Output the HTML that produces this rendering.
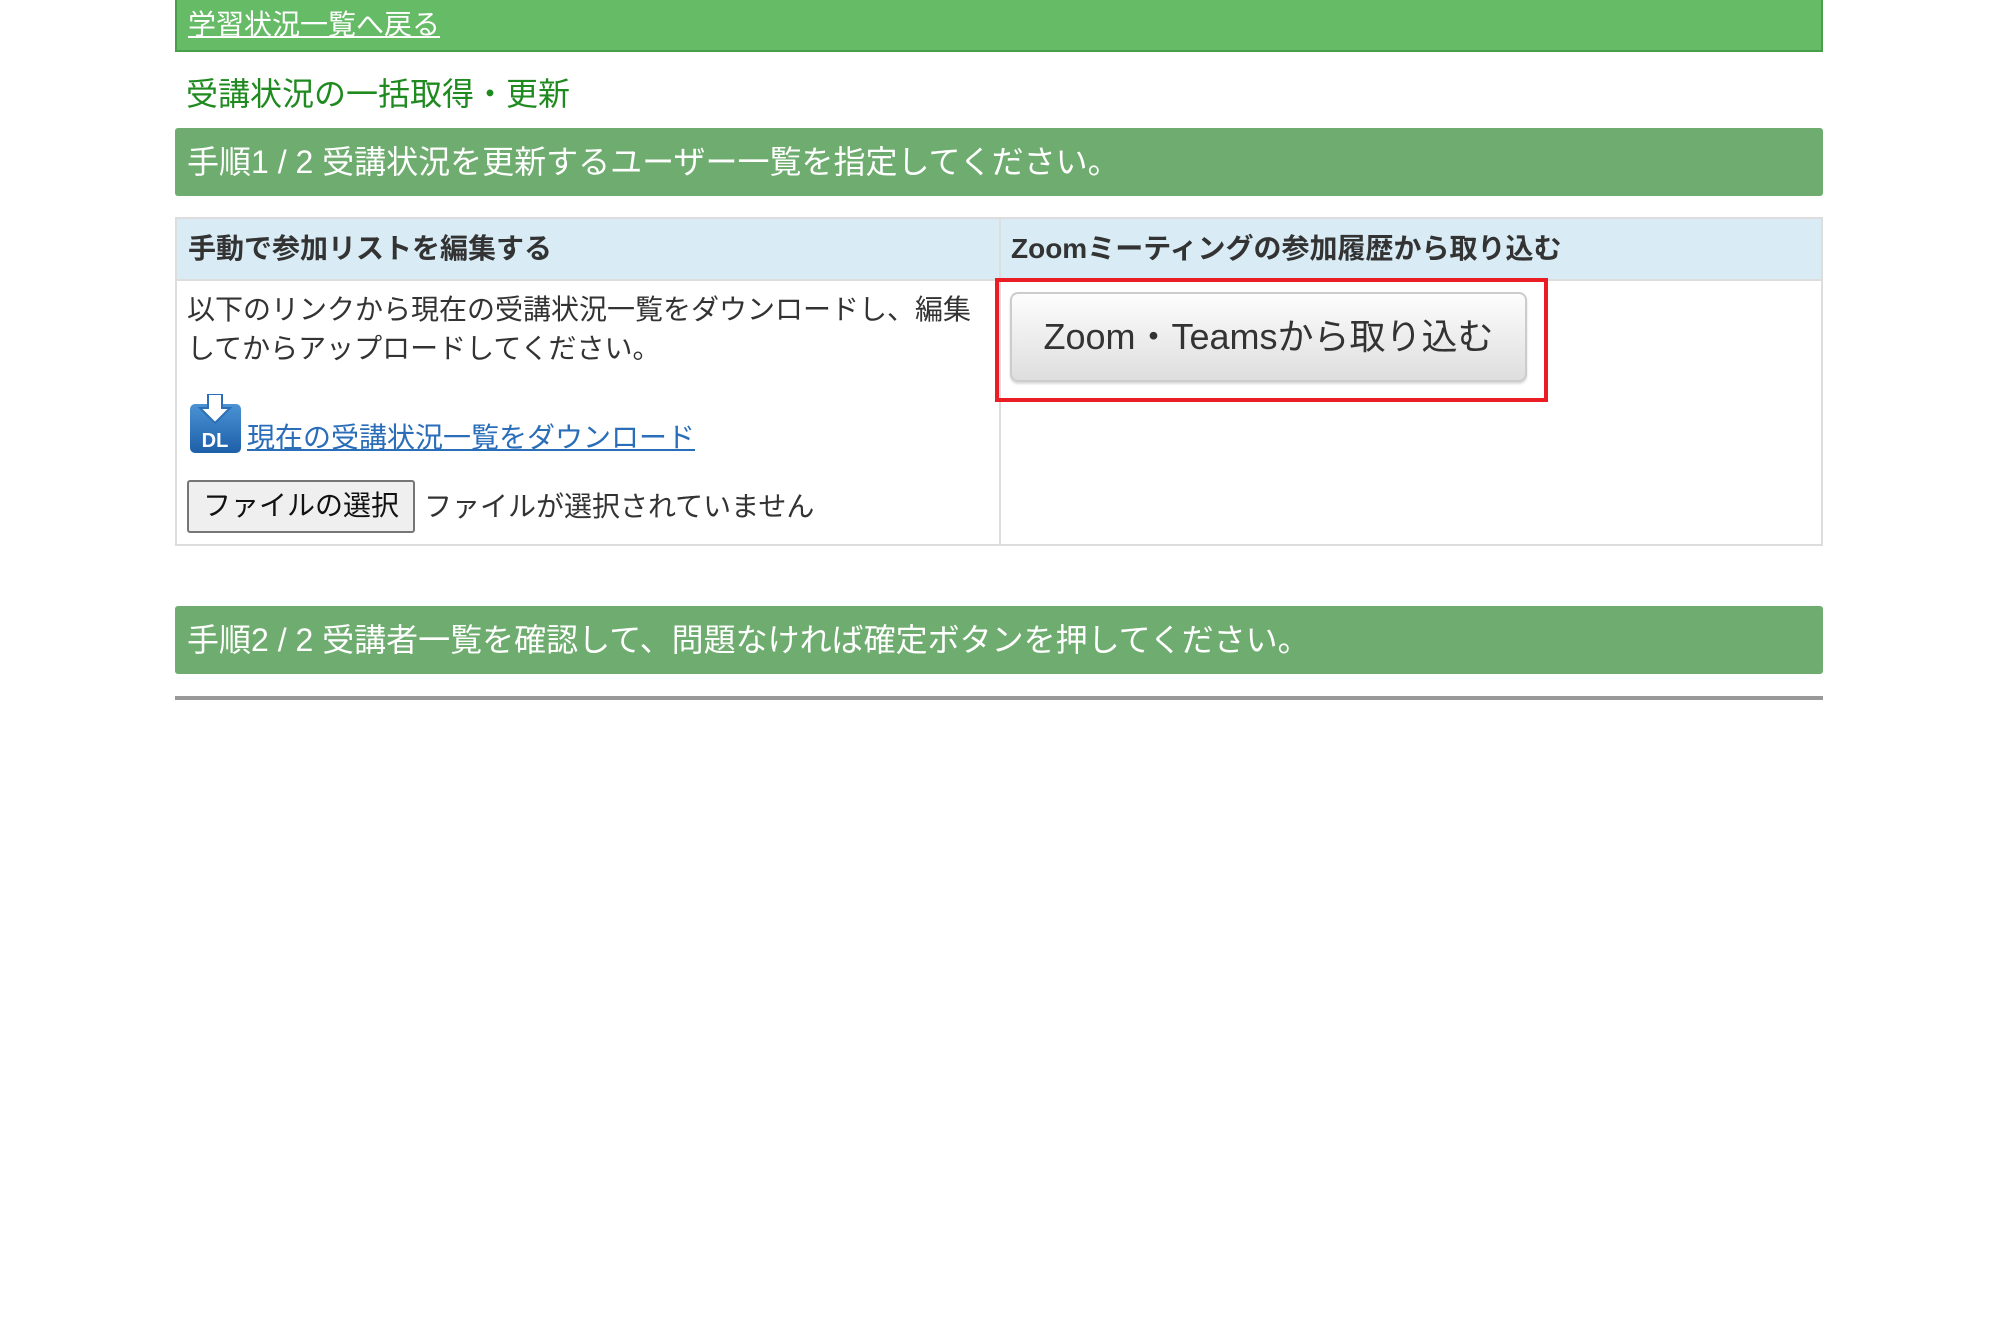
<!DOCTYPE html>
<html><head><meta charset="utf-8"><style>
*{box-sizing:border-box;margin:0;padding:0}
body{width:1998px;height:1344px;background:#fff;font-family:"Liberation Sans","Noto Sans CJK JP",sans-serif;color:#333;position:relative;overflow:hidden}
.abs{position:absolute}
.top{left:175px;top:0;width:1648px;height:52px;background:#66bb66;border-left:2px solid #4a9d4a;border-bottom:2px solid #4a9d4a;border-right:2px solid #4a9d4a}
.top a{position:absolute;left:11px;top:7px;font-size:28px;color:#fff;text-decoration:underline;line-height:36px}
.title{left:186px;top:74px;font-size:32px;color:#1f8a1f;line-height:40px}
.step{left:175px;width:1648px;height:68px;background:#6fac6f;border-radius:3px;color:#fff;font-size:32px;line-height:68px;padding-left:12px}
.tbl{left:175px;top:217px;width:1648px;height:329px;border:2px solid #ddd}
.hd{position:absolute;top:0;height:62px;background:#d9ecf5;border-bottom:2px solid #ddd;font-weight:bold;font-size:28px;line-height:60px;padding-left:11px;color:#333}
.vl{position:absolute;left:822px;top:0;width:2px;height:100%;background:#ddd}
.body{left:187px;top:290px;font-size:28px;line-height:39px;color:#333;width:820px}
.dl{left:189px;top:394px;width:53px;height:60px}
.lnk{left:247px;top:420px;font-size:28px;color:#2a6db8;text-decoration:underline;line-height:36px}
.fbtn{left:187px;top:480px;width:228px;height:53px;border:2px solid #767676;border-radius:3px;background:#efefef;font-size:28px;line-height:48px;text-align:center;color:#111}
.ftxt{left:424px;top:487px;font-size:28px;line-height:40px;color:#333}
.red{left:995px;top:278px;width:553px;height:124px;border:4px solid #ea1c24}
.zbtn{left:1010px;top:292px;width:517px;height:90px;border:2px solid #ccc;border-radius:8px;background:linear-gradient(#fdfdfd,#dedede);box-shadow:0 2px 2px rgba(0,0,0,.15);font-size:36px;text-align:center;line-height:86px;color:#333}
.line{left:175px;top:696px;width:1648px;height:4px;background:#999}
</style></head><body>
<div class="abs top"><a>学習状況一覧へ戻る</a></div>
<div class="abs title">受講状況の一括取得・更新</div>
<div class="abs step" style="top:128px">手順1 / 2 受講状況を更新するユーザー一覧を指定してください。</div>
<div class="abs tbl">
<div class="hd" style="left:0;width:822px">手動で参加リストを編集する</div>
<div class="hd" style="left:822px;width:822px;padding-left:12px">Zoomミーティングの参加履歴から取り込む</div>
<div class="vl"></div>
</div>
<div class="abs body">以下のリンクから現在の受講状況一覧をダウンロードし、編集<br>してからアップロードしてください。</div>
<svg class="abs dl" viewBox="0 0 53 60"><defs><linearGradient id="g" x1="0" y1="0" x2="0" y2="1"><stop offset="0" stop-color="#4b93d4"/><stop offset="1" stop-color="#1d5fa8"/></linearGradient></defs>
<rect x="1" y="10" width="51" height="49" rx="5" fill="url(#g)"/>
<path d="M19 0h14v14h8L26 29 11 14h8z" fill="#fff" stroke="#2c6fb8" stroke-width="2"/>
<text x="26" y="53" font-family="Liberation Sans" font-weight="bold" font-size="20" fill="#fff" text-anchor="middle">DL</text></svg>
<div class="abs lnk">現在の受講状況一覧をダウンロード</div>
<div class="abs fbtn">ファイルの選択</div>
<div class="abs ftxt">ファイルが選択されていません</div>
<div class="abs red"></div>
<div class="abs zbtn">Zoom・Teamsから取り込む</div>
<div class="abs step" style="top:606px">手順2 / 2 受講者一覧を確認して、問題なければ確定ボタンを押してください。</div>
<div class="abs line"></div>
</body></html>
